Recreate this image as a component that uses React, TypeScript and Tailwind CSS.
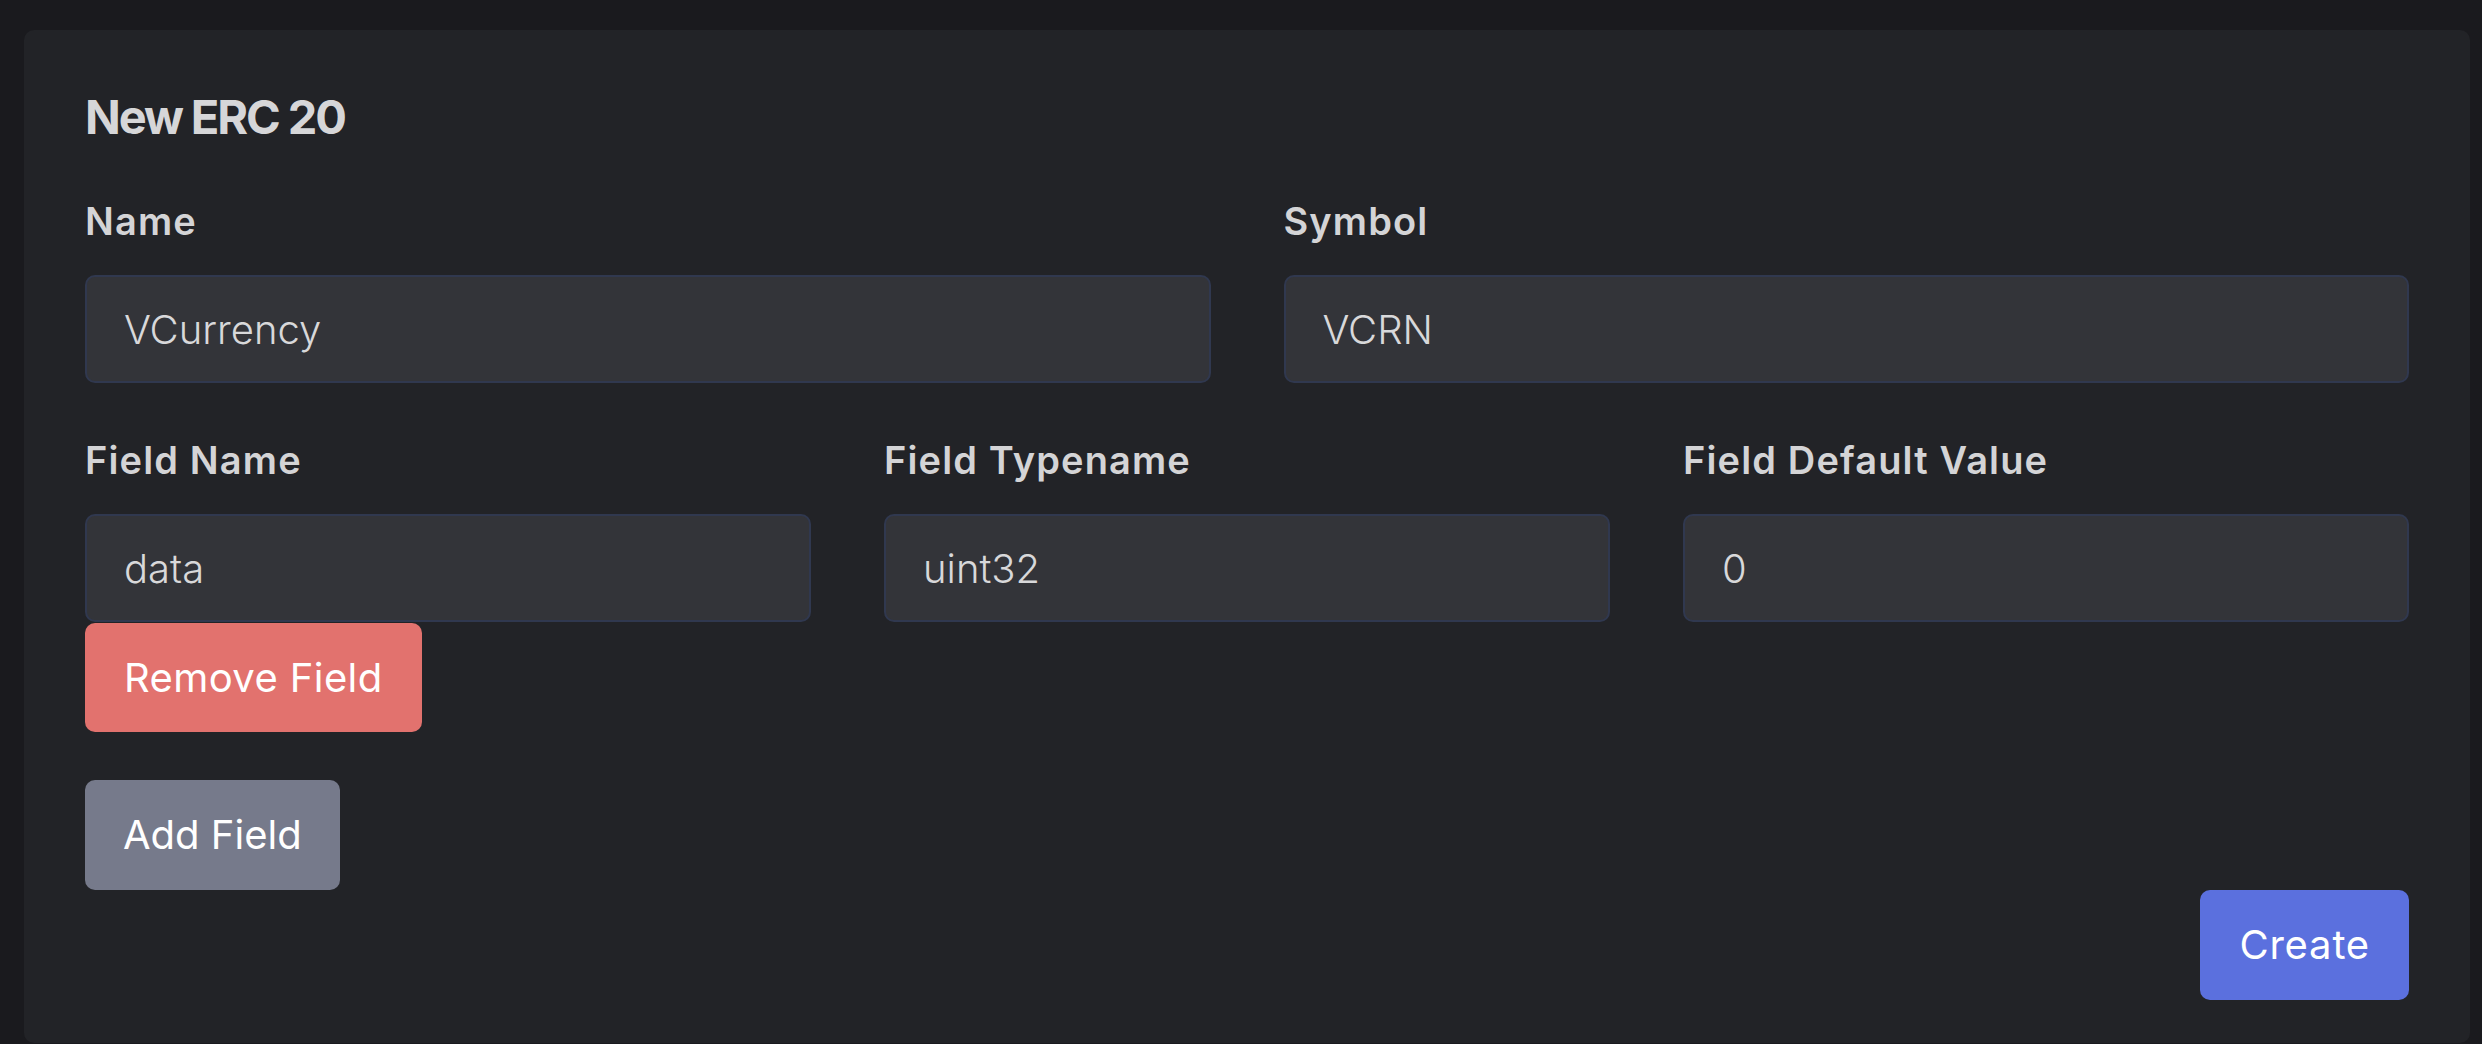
import { useState } from 'react';

interface FieldRow {
  name: string;
  typename: string;
  defaultValue: string;
}

function Label({ children }: { children: React.ReactNode }) {
  return (
    <label className="block text-[38px] leading-[38px] font-semibold tracking-[0.03em] text-[#d4d4d6]">{children}</label>
  );
}

function TextInput({ value, onChange }: { value: string; onChange: (v: string) => void }) {
  return (
    <input
      value={value}
      onChange={(e) => onChange(e.target.value)}
      className="mt-[35px] block h-[108px] w-full rounded-[10px] border-2 border-[#30384f] bg-[#333439] px-[37px] text-[40px] font-light text-[#d8d8da] outline-none"
    />
  );
}

export default function App() {
  const [name, setName] = useState('VCurrency');
  const [symbol, setSymbol] = useState('VCRN');
  const [fields, setFields] = useState<FieldRow[]>([{ name: 'data', typename: 'uint32', defaultValue: '0' }]);

  const updateField = (i: number, key: keyof FieldRow, v: string) => {
    setFields((prev) => prev.map((f, idx) => (idx === i ? { ...f, [key]: v } : f)));
  };

  return (
    <div className="min-h-screen bg-[#1a1a1e] pt-[30px] pl-[24px] pr-[12px] font-['Inter',sans-serif]">
      <div className="h-[1013px] rounded-[10px] bg-[#222327] px-[61px] pt-[63px]">
        <h1 className="text-[47px] leading-[47px] font-bold tracking-[-0.045em] text-[#d6d6d8]">New ERC 20</h1>

        <div className="mt-[62px] grid grid-cols-2 gap-x-[73px]">
          <div>
            <Label>Name</Label>
            <TextInput value={name} onChange={setName} />
          </div>
          <div>
            <Label>Symbol</Label>
            <TextInput value={symbol} onChange={setSymbol} />
          </div>
        </div>

        {fields.map((f, i) => (
          <div key={i} className="mt-[58px]">
            <div className="grid grid-cols-3 gap-x-[73px]">
              <div>
                <Label>Field Name</Label>
                <TextInput value={f.name} onChange={(v) => updateField(i, 'name', v)} />
              </div>
              <div>
                <Label>Field Typename</Label>
                <TextInput value={f.typename} onChange={(v) => updateField(i, 'typename', v)} />
              </div>
              <div>
                <Label>Field Default Value</Label>
                <TextInput value={f.defaultValue} onChange={(v) => updateField(i, 'defaultValue', v)} />
              </div>
            </div>
            <button
              onClick={() => setFields((prev) => prev.filter((_, idx) => idx !== i))}
              className="mt-[1px] h-[109px] rounded-[10px] bg-[#e2726e] px-[39px] text-[40px] tracking-[0.01em] text-white"
            >
              Remove Field
            </button>
          </div>
        ))}

        <button
          onClick={() => setFields((prev) => [...prev, { name: '', typename: '', defaultValue: '' }])}
          className="mt-[48px] block h-[110px] rounded-[10px] bg-[#767a8b] px-[38px] text-[40px] text-white"
        >
          Add Field
        </button>

        <div className="flex justify-end">
          <button className="h-[110px] rounded-[10px] bg-[#5b70de] px-[39px] text-[40px] tracking-[0.02em] text-white">
            Create
          </button>
        </div>
      </div>
    </div>
  );
}
